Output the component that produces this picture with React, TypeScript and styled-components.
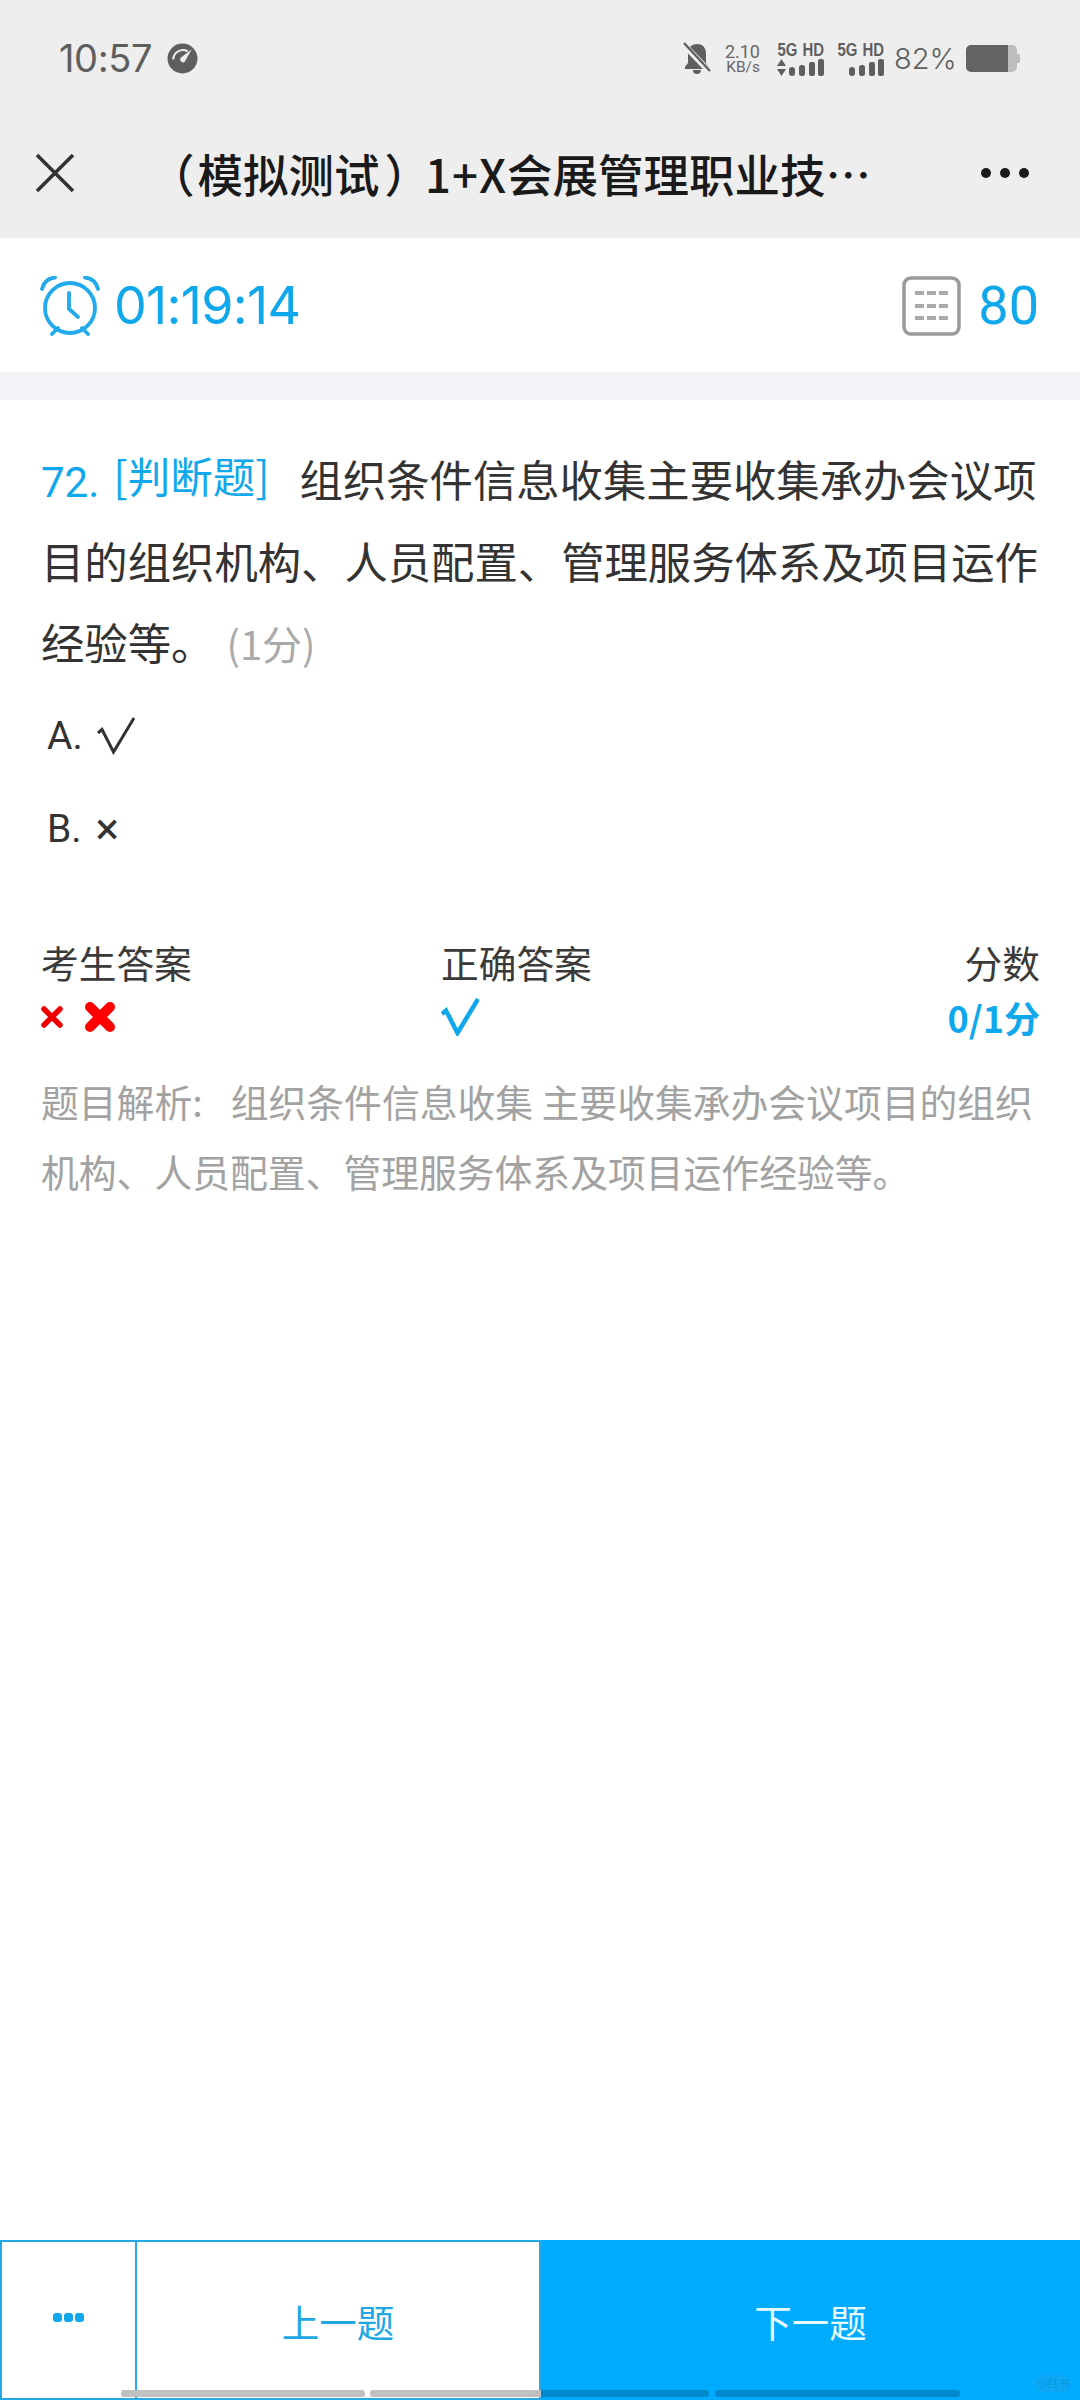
import React from "react";
import styled, { createGlobalStyle } from "styled-components";

const Global = createGlobalStyle`
  html, body { margin: 0; padding: 0; background: #fff; }
  body { font-family: Roboto, "Noto Sans CJK SC", sans-serif; }
  * { box-sizing: border-box; }
`;

const BLUE = "#0fa8ec";

const Page = styled.div`
  width: 1080px;
  height: 2400px;
  display: flex;
  flex-direction: column;
  position: relative;
  overflow: hidden;
  background: #fff;
`;

const Header = styled.header`
  background: #eeeeef;
  height: 238px;
  display: flex;
  flex-direction: column;
`;

const StatusBar = styled.div`
  height: 116px;
  padding: 40px 0 0 59px;
  display: flex;
  justify-content: space-between;
  align-items: flex-start;
`;

const StatusLeft = styled.div`
  display: flex;
  align-items: center;
  gap: 15px;
  height: 36px;
`;

const Clock = styled.span`
  font-family: Inter, Roboto, sans-serif;
  font-size: 38px;
  color: #5e5e5e;
  letter-spacing: -0.4px;
  line-height: 36px;
`;

const StatusRight = styled.div`
  display: flex;
  align-items: center;
  height: 36px;
  margin-right: 60px;
`;

const Speed = styled.div`
  display: flex;
  flex-direction: column;
  align-items: flex-end;
  color: #666;
  margin-left: 13px;
  width: 36px;
  padding-top: 2px;
`;

const SpeedValue = styled.span`
  font-family: Roboto, sans-serif;
  font-size: 18px;
  line-height: 17px;
`;

const SpeedUnit = styled.span`
  font-family: Roboto, sans-serif;
  font-size: 15.5px;
  line-height: 15px;
`;

const Signal = styled.div`
  display: flex;
  flex-direction: column;
  align-items: flex-end;
  width: 48px;
  margin-left: ${(p: { $gap: number }) => p.$gap}px;
  padding-top: 2px;
`;

const SignalLabel = styled.span`
  font-family: "Liberation Sans", sans-serif;
  font-weight: 700;
  font-size: 18px;
  line-height: 17px;
  color: #5f5f5f;
  white-space: nowrap;
  word-spacing: 1px;
  transform: scaleX(0.83);
  transform-origin: right center;
`;

const Percent = styled.span`
  font-family: Inter, Roboto, sans-serif;
  font-size: 29px;
  font-weight: 300;
  color: #5e5e5e;
  margin-left: 10px;
  width: 61px;
  white-space: nowrap;
  line-height: 36px;
  padding-top: 2px;
`;

const Battery = styled.svg`
  margin-left: 11px;
  flex: none;
`;

const NavBar = styled.div`
  height: 122px;
  display: grid;
  grid-template-columns: 108px 1fr 128px;
  align-items: center;
`;

const CloseBtn = styled.div`
  display: flex;
  justify-content: flex-start;
  padding: 0 0 8px 35px;
`;

const Title = styled.h1`
  margin: 0 0 0 44px;
  padding-bottom: 8px;
  font-weight: 500;
  font-size: 45.5px;
  line-height: 52px;
  color: #1a1a1a;
  white-space: nowrap;
  font-family: "Noto Sans CJK SC", sans-serif;
`;

const Paren = styled.span<{ $dx: number }>`
  display: inline-block;
  transform: translateX(${(p) => p.$dx}px);
`;

const TitleLatin = styled.span`
  letter-spacing: 1px;
`;

const MoreBtn = styled.div`
  display: flex;
  gap: 9px;
  padding: 0 0 8px 29px;
`;

const MoreDot = styled.i`
  width: 10px;
  height: 10px;
  border-radius: 50%;
  background: #1a1a1a;
`;

const TimerBar = styled.div`
  height: 134px;
  padding: 2px 41px 0 40px;
  display: flex;
  justify-content: space-between;
  align-items: center;
  background: #fff;
`;

const TimerGroup = styled.div`
  display: flex;
  align-items: center;
  gap: ${(p: { $gap: number }) => p.$gap}px;
`;

const TimerText = styled.span`
  font-family: Inter, Roboto, sans-serif;
  font-weight: 400;
  font-size: 52px;
  letter-spacing: -0.7px;
  color: ${BLUE};
  line-height: 60px;
`;

const CountText = styled.span`
  font-family: Roboto, sans-serif;
  font-size: 54px;
  color: ${BLUE};
  line-height: 60px;
`;

const Divider = styled.div`
  height: 28px;
  background: #f3f5f9;
`;

const Content = styled.main`
  flex: 1;
  padding: 0 40px 0 41px;
  display: flex;
  flex-direction: column;
`;

const Question = styled.div`
  margin-top: 38px;
  font-size: 43.35px;
  line-height: 81.5px;
  color: #333;
  font-family: "Noto Sans CJK SC", sans-serif;
`;

const QNum = styled.span`
  color: ${BLUE};
  font-family: Roboto, sans-serif;
  font-size: 42px;
  line-height: 1;
`;

const QType = styled.span`
  display: inline-block;
  color: ${BLUE};
  font-size: 42.5px;
  line-height: 50px;
  margin: 0 30px 0 14px;
  transform: translateY(-4px);
`;

const Score = styled.span`
  color: #aaa;
  font-size: 40px;
  line-height: 1;
  margin-left: 12px;
`;

const Option = styled.div<{ $mt: number; $mb: number }>`
  display: flex;
  align-items: center;
  gap: 14px;
  height: 60px;
  margin: ${(p) => p.$mt}px 0 ${(p) => p.$mb}px 6px;
  font-family: Roboto, sans-serif;
  font-size: 39px;
  color: #333;
`;

const OptionMark = styled.span`
  font-size: 44px;
`;

const Results = styled.div`
  display: grid;
  grid-template-columns: 400px 1fr auto;
  margin-top: 78px;
`;

const ResultCol = styled.div`
  display: flex;
  flex-direction: column;
  align-items: ${(p: { $end?: boolean }) => (p.$end ? "flex-end" : "flex-start")};
`;

const ResultLabel = styled.div`
  font-size: 37.7px;
  line-height: 50px;
  color: #3a3a3a;
  font-family: "Noto Sans CJK SC", sans-serif;
`;

const ResultValue = styled.div`
  height: 60px;
  display: flex;
  align-items: center;
  gap: 22px;
`;

const ResultScore = styled.span`
  font-family: "Noto Sans CJK SC", sans-serif;
  font-weight: 700;
  font-size: 36px;
  color: ${BLUE};
`;

const Analysis = styled.div`
  margin-top: 19px;
  font-size: 37.8px;
  line-height: 70px;
  color: #a2a2a2;
  font-family: "Noto Sans CJK SC", sans-serif;
`;

const AnalysisGap = styled.span`
  margin-left: 28px;
`;

const Footer = styled.footer`
  height: 160px;
  display: grid;
  grid-template-columns: 137px 404px 1fr;
`;

const MenuBtn = styled.div`
  border: 2.5px solid #27a9e6;
  display: flex;
  align-items: center;
  justify-content: center;
  gap: 2px;
  padding-bottom: 6px;
`;

const MenuDot = styled.i`
  width: 9px;
  height: 9px;
  border-radius: 3px;
  background: #0fa8ec;
`;

const PrevBtn = styled.div`
  border: 2.5px solid #27a9e6;
  border-left: 0;
  display: flex;
  align-items: center;
  justify-content: center;
  font-size: 37.5px;
  color: #21a7e4;
  font-family: "Noto Sans CJK SC", sans-serif;
`;

const NextBtn = styled.div`
  background: #01abff;
  display: flex;
  align-items: center;
  justify-content: center;
  font-size: 37.5px;
  color: #e6fbff;
  font-family: "Noto Sans CJK SC", sans-serif;
`;

const NavSegment = styled.i<{ $l: number; $w: number }>`
  position: absolute;
  bottom: 3px;
  height: 7px;
  left: ${(p) => p.$l}px;
  width: ${(p) => p.$w}px;
  border-radius: 3px;
  background: linear-gradient(to right, #bfc1c1 0, #bfc1c1 ${(p) => 541 - p.$l}px, #0089cc ${(p) => 541 - p.$l}px);
`;

const Watermark = styled.div`
  position: absolute;
  right: 9px;
  bottom: 8px;
  width: 36px;
  height: 17px;
  border-radius: 9px;
  background: #0ea7f4;
  color: #0797dd;
  font-size: 11px;
  line-height: 17px;
  text-align: center;
  white-space: nowrap;
  font-family: "Noto Sans CJK SC", sans-serif;
`;

const Bars = ({ arrows }: { arrows?: boolean }) => (
  <svg width="48" height="17" viewBox="0 0 48 17" fill="#5f5f5f">
    {arrows && <path d="M5.500 0l4.500 7H1zM5.500 17L1 10h9z" />}
    <rect x="13" y="8" width="6" height="9" rx="3" />
    <rect x="23" y="6" width="6" height="11" rx="2.500" />
    <rect x="33" y="3" width="6" height="14" rx="2" />
    <rect x="42" y="0" width="6" height="17" rx="2" />
  </svg>
);

const Check = ({ color, width, size = 38 }: { color: string; width: number; size?: number }) => (
  <svg width={size} height={size} viewBox="0 0 38 38" fill="none">
    <path d="M1 16L5 12.500L16.500 35L37 1" stroke={color} strokeWidth={width} strokeLinejoin="miter" />
  </svg>
);

export default function App() {
  return (
    <Page>
      <Global />
      <Header>
        <StatusBar>
          <StatusLeft>
            <Clock>10:57</Clock>
            <svg width="31" height="31" viewBox="0 0 30 30">
              <circle cx="15" cy="15" r="14.500" fill="#5e5e5e" />
              <path d="M6 16a9.500 9.500 0 0 1 14-8" stroke="#eee" strokeWidth="2" fill="none" />
              <path d="M24 6L13 14.500a3 3 0 0 0 4 4z" fill="#eee" />
            </svg>
          </StatusLeft>
          <StatusRight>
            <svg width="28" height="32" viewBox="0 0 28 32">
              <path d="M14 2c6 0 9 4 9 10v9l3 4v2H2v-2l3-4v-9c0-6 3-10 9-10zM10 28h8a4 4 0 0 1-8 0z" fill="#5f5f5f" />
              <path d="M0 2L27 30" stroke="#eeeeef" strokeWidth="6" />
              <path d="M1 1L27 29" stroke="#5f5f5f" strokeWidth="2.400" />
            </svg>
            <Speed>
              <SpeedValue>2.10</SpeedValue>
              <SpeedUnit>KB/s</SpeedUnit>
            </Speed>
            <Signal $gap={16}>
              <SignalLabel>5G HD</SignalLabel>
              <Bars arrows />
            </Signal>
            <Signal $gap={12}>
              <SignalLabel>5G HD</SignalLabel>
              <Bars />
            </Signal>
            <Percent>82%</Percent>
            <Battery width="54" height="27" viewBox="0 0 54 27">
              <path d="M42 0h4a5 5 0 0 1 5 5v4h1.500a1.500 1.500 0 0 1 1.500 1.500v6a1.500 1.500 0 0 1-1.500 1.500H51v4a5 5 0 0 1-5 5h-4z" fill="#bdbdbd" />
              <path d="M5 0h37v27H5a5 5 0 0 1-5-5V5a5 5 0 0 1 5-5z" fill="#636363" />
            </Battery>
          </StatusRight>
        </StatusBar>
        <NavBar>
          <CloseBtn>
            <svg width="40" height="40" viewBox="0 0 40 40">
              <path d="M2 2L38 38M38 2L2 38" stroke="#333" strokeWidth="3.600" />
            </svg>
          </CloseBtn>
          <Title>
            <Paren $dx={-3}>（</Paren>模拟测试<Paren $dx={5}>）</Paren>
            <TitleLatin>1+X</TitleLatin>会展管理职业技⋯
          </Title>
          <MoreBtn>
            <MoreDot />
            <MoreDot />
            <MoreDot />
          </MoreBtn>
        </NavBar>
      </Header>
      <TimerBar>
        <TimerGroup $gap={14}>
          <svg width="60" height="60" viewBox="0 0 60 60" fill="none" stroke="#21aaec" strokeWidth="3.800">
            <circle cx="30" cy="32" r="25" />
            <path d="M29 17v16l9 8" strokeLinecap="round" />
            <path d="M2 13C4 5 9 2 15 1.500M58 13C56 5 51 2 45 1.500" strokeLinecap="round" />
            <path d="M12 58l6-6M48 58l-6-6" strokeLinecap="round" />
          </svg>
          <TimerText>01:19:14</TimerText>
        </TimerGroup>
        <TimerGroup $gap={16}>
          <svg width="60" height="60" viewBox="0 0 60 60" fill="none">
            <rect x="2" y="2" width="55" height="56" rx="7" stroke="#999" strokeWidth="3.500" />
            <path d="M13 17h9M25 17h9M37 17h9M13 30h9M25 30h9M37 30h9M13 42h9M25 42h9M37 42h9" stroke="#aaa" strokeWidth="4" />
          </svg>
          <CountText>80</CountText>
        </TimerGroup>
      </TimerBar>
      <Divider />
      <Content>
        <Question>
          <QNum>72.</QNum>
          <QType>[判断题]</QType>
          组织条件信息收集主要收集承办会议项目的组织机构、人员配置、管理服务体系及项目运作经验等。
          <Score>(1分)</Score>
        </Question>
        <Option $mt={23} $mb={33}>
          A.
          <Check color="#333" width={3} />
        </Option>
        <Option $mt={0} $mb={0}>
          B.
          <OptionMark>×</OptionMark>
        </Option>
        <Results>
          <ResultCol>
            <ResultLabel>考生答案</ResultLabel>
            <ResultValue>
              <svg width="22" height="22" viewBox="0 0 22 22">
                <path d="M3 3L19 19M19 3L3 19" stroke="#f00000" strokeWidth="5.500" strokeLinecap="round" />
              </svg>
              <svg width="30" height="30" viewBox="0 0 30 30">
                <path d="M5 5L25 25M25 5L5 25" stroke="#ff0000" strokeWidth="10" strokeLinecap="round" />
              </svg>
            </ResultValue>
          </ResultCol>
          <ResultCol>
            <ResultLabel>正确答案</ResultLabel>
            <ResultValue>
              <Check color={BLUE} width={4.5} />
            </ResultValue>
          </ResultCol>
          <ResultCol $end>
            <ResultLabel>分数</ResultLabel>
            <ResultValue>
              <ResultScore>0/1分</ResultScore>
            </ResultValue>
          </ResultCol>
        </Results>
        <Analysis>
          题目解析:<AnalysisGap>组织条件信息收集 主要收集承办会议项目的组织机构、人员配置、管理服务体系及项目运作经验等。</AnalysisGap>
        </Analysis>
      </Content>
      <Footer>
        <MenuBtn>
          <MenuDot />
          <MenuDot />
          <MenuDot />
        </MenuBtn>
        <PrevBtn>上一题</PrevBtn>
        <NextBtn>下一题</NextBtn>
      </Footer>
      <NavSegment $l={121} $w={244} />
      <NavSegment $l={370} $w={339} />
      <NavSegment $l={715} $w={245} />
      <Watermark>小红书</Watermark>
    </Page>
  );
}
